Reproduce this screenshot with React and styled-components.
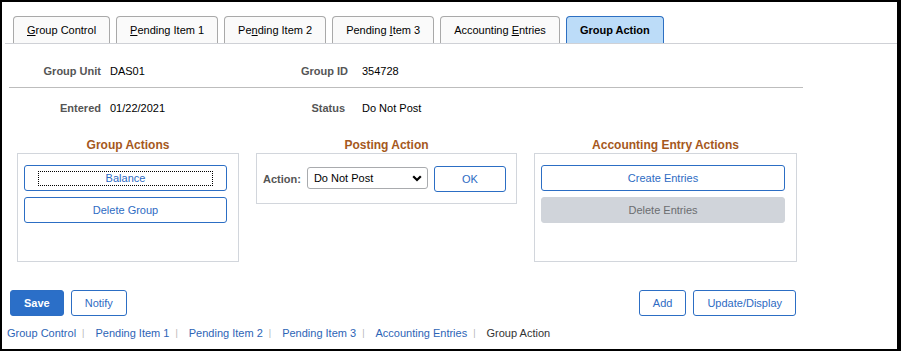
import React from "react";
import styled, { createGlobalStyle } from "styled-components";

const Global = createGlobalStyle`
    * { box-sizing: border-box; }
    body {
        margin: 0;
        background: #fff;
        font-family: "Liberation Sans", Arial, sans-serif;
    }
`;

const Page = styled.div`
    width: 901px;
    height: 351px;
    border: 2px solid #000;
    border-right-width: 4px;
    background: #fff;
    overflow: hidden;
`;

const TabBar = styled.ul`
    margin: 14px 0 0 3px;
    padding: 0 0 0 8px;
    list-style: none;
    display: flex;
    align-items: flex-end;
    gap: 6px;
    border-bottom: 1px solid #cfd1d6;
`;

const Tab = styled.li`
    height: 27px;
    padding: 0 13px;
    display: flex;
    align-items: center;
    border: 1px solid ${p => p.$active ? "#2d6fc2" : "#a9a9a9"};
    border-bottom: none;
    border-radius: 4px 4px 0 0;
    background: ${p => p.$active ? "#bcdcf8" : "#fafafa"};
    color: #000;
    font-size: 11px;
    font-weight: ${p => p.$active ? 700 : 400};
    white-space: nowrap;
    & u { text-underline-offset: 1px; }
`;

const Form = styled.div`
    margin: 11px 0 0 7px;
    width: 794px;
`;

const Row = styled.div`
    display: grid;
    grid-template-columns: 101px 152px 100px 1fr;
    align-items: center;
    height: 32px;
    margin-top: ${p => p.$first ? 0 : 4}px;
    border-bottom: ${p => p.$divider ? "1px solid #bdbdbd" : "none"};
    ${p => p.$divider && "height: 33px;"}
`;

const Label = styled.span`
    text-align: right;
    padding-right: ${p => p.$pad}px;
    font-size: 11px;
    font-weight: 700;
    color: #555;
`;

const Value = styled.span`
    font-size: 11px;
    color: #000;
`;

const Sections = styled.div`
    display: grid;
    grid-template-columns: 222px 261px 263px;
    column-gap: 17px;
    align-items: start;
    margin: 13px 0 0 15px;
`;

const Heading = styled.h3`
    margin: 0;
    height: 16px;
    line-height: 16px;
    text-align: center;
    font-size: 12px;
    font-weight: 700;
    color: #a5581c;
`;

const GroupBox = styled.div`
    height: ${p => p.$height}px;
    border: 1px solid #d2d6dc;
    padding: 11px 11px 0 6px;
    display: flex;
    flex-direction: column;
    gap: 6px;
`;

const ActionBox = styled.div`
    height: 51px;
    border: 1px solid #d2d6dc;
    padding: 12px 0 0 6px;
    display: flex;
    align-items: flex-start;
`;

const FieldLabel = styled.span`
    font-size: 11px;
    font-weight: 700;
    color: #555;
    line-height: 26px;
    margin-right: 6px;
`;

const SelectWrap = styled.div`
    position: relative;
    margin-top: 1px;
    width: 121px;
    height: 22px;
`;

const Select = styled.select`
    appearance: none;
    width: 100%;
    height: 100%;
    border: 1px solid #a9abae;
    border-radius: 3px;
    background: #fff;
    padding: 0 0 0 6px;
    font-family: inherit;
    font-size: 11px;
    color: #000;
`;

const Chevron = styled.svg`
    position: absolute;
    right: 6px;
    top: 8px;
    pointer-events: none;
`;

const Button = styled.button`
    height: 26px;
    padding: 0 13px;
    border-radius: 3px;
    font-family: inherit;
    font-size: 11px;
    white-space: nowrap;
    width: ${p => p.$block ? "100%" : p.$width ? p.$width + "px" : "auto"};
    margin-left: ${p => p.$ml || 0}px;
    border: 1px solid ${p => p.$variant === "disabled" ? "#d0d4da" : "#2c6ec4"};
    background: ${p => p.$variant === "primary" ? "#2b6fc8" : p.$variant === "disabled" ? "#d0d4da" : "#fff"};
    color: ${p => p.$variant === "primary" ? "#fff" : p.$variant === "disabled" ? "#6b6d70" : "#2e6bc3"};
    font-weight: ${p => p.$variant === "primary" ? 700 : 400};
    display: flex;
    align-items: center;
    justify-content: center;
`;

const FocusRing = styled.span`
    display: block;
    width: 100%;
    height: 15px;
    line-height: 13px;
    border: 1px dotted #000;
    text-align: center;
`;

const Toolbar = styled.div`
    display: flex;
    align-items: center;
    gap: 7px;
    width: 786px;
    margin: 28px 0 0 8px;
`;

const Spacer = styled.div`
    flex: 1;
`;

const Footer = styled.nav`
    display: flex;
    align-items: center;
    margin: 10px 0 0 5px;
    height: 14px;
    font-size: 11px;
`;

const FooterLink = styled.a`
    color: ${p => p.$current ? "#333" : "#2d64b6"};
    text-decoration: none;
`;

const Separator = styled.span`
    color: #b5b5b5;
    font-size: 9px;
    margin: 0 11px 0 6px;
`;

const tabs = [
    { label: <><u>G</u>roup Control</> },
    { label: <><u>P</u>ending Item 1</> },
    { label: <>Pe<u>n</u>ding Item 2</> },
    { label: <>Pending <u>I</u>tem 3</> },
    { label: <>Accounting <u>E</u>ntries</> },
    { label: <>Group Action</>, active: true },
];

const links = ["Group Control", "Pending Item 1", "Pending Item 2", "Pending Item 3", "Accounting Entries", "Group Action"];

export default function App() {
    return <>
        <Global />
        <Page>
            <TabBar>
                {tabs.map((t, i) => <Tab key={i} $active={t.active}><span>{t.label}</span></Tab>)}
            </TabBar>
            <Form>
                <Row $first $divider>
                    <Label $pad={9}>Group Unit</Label>
                    <Value>DAS01</Value>
                    <Label $pad={14}>Group ID</Label>
                    <Value>354728</Value>
                </Row>
                <Row>
                    <Label $pad={9}>Entered</Label>
                    <Value>01/22/2021</Value>
                    <Label $pad={17}>Status</Label>
                    <Value>Do Not Post</Value>
                </Row>
            </Form>
            <Sections>
                <div>
                    <Heading>Group Actions</Heading>
                    <GroupBox $height={109}>
                        <Button $block><FocusRing>Balance</FocusRing></Button>
                        <Button $block>Delete Group</Button>
                    </GroupBox>
                </div>
                <div>
                    <Heading>Posting Action</Heading>
                    <ActionBox>
                        <FieldLabel>Action:</FieldLabel>
                        <SelectWrap>
                            <Select defaultValue="dnp">
                                <option value="dnp">Do Not Post</option>
                                <option value="post">Post</option>
                            </Select>
                            <Chevron width="10" height="7" viewBox="0 0 10 7">
                                <path d="M1.2 1.2 L5 5 L8.8 1.2" fill="none" stroke="#000" strokeWidth="2.2" />
                            </Chevron>
                        </SelectWrap>
                        <Button $width={72} $ml={6}>OK</Button>
                    </ActionBox>
                </div>
                <div>
                    <Heading>Accounting Entry Actions</Heading>
                    <GroupBox $height={109}>
                        <Button $block>Create Entries</Button>
                        <Button $block $variant="disabled" disabled>Delete Entries</Button>
                    </GroupBox>
                </div>
            </Sections>
            <Toolbar>
                <Button $variant="primary">Save</Button>
                <Button>Notify</Button>
                <Spacer />
                <Button>Add</Button>
                <Button>Update/Display</Button>
            </Toolbar>
            <Footer>
                {links.map((l, i) => <React.Fragment key={l}>
                    <FooterLink href="#" $current={i === links.length - 1}>{l}</FooterLink>
                    {i < links.length - 1 && <Separator>|</Separator>}
                </React.Fragment>)}
            </Footer>
        </Page>
    </>;
}
